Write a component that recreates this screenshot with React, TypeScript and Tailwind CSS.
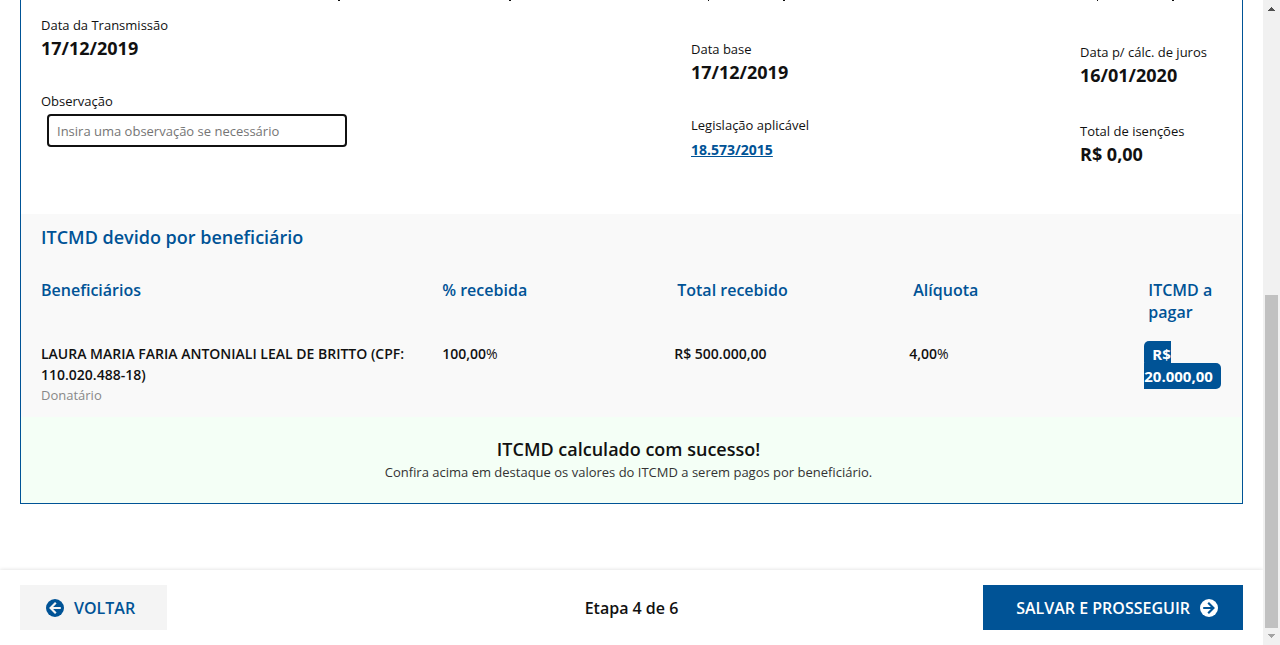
import React from "react";

function Field({ label, value }: { label: string; value: string }) {
  return (
    <div>
      <dt className="text-[13px] leading-6">{label}</dt>
      <dd className="text-lg leading-[22px] font-bold">{value}</dd>
    </div>
  );
}

function Percent({ value }: { value: string }) {
  return (
    <>
      {value}
      <span className="font-normal">%</span>
    </>
  );
}

function ArrowIcon({ className, flip, arrow }: { className: string; flip?: boolean; arrow: string }) {
  return (
    <svg viewBox="0 0 18 18" className={className} aria-hidden="true">
      <circle cx="9" cy="9" r="9" fill="currentColor" />
      <path
        d={flip ? "M14.8 9H4.6M9.8 3.8L4.6 9l5.2 5.2" : "M3.2 9h10.2M8.2 3.8L13.4 9l-5.2 5.2"}
        fill="none"
        className={arrow}
        strokeWidth="2.2"
      />
    </svg>
  );
}

function ClippedLine() {
  return (
    <div className="grid h-px grid-cols-[650fr_389fr_162fr]" aria-hidden="true">
      <div className="flex pl-[297px]">
        <i className="h-px w-0.5 bg-[#111]" />
        <i className="ml-[169px] h-px w-0.5 bg-[#111]" />
      </div>
      <div className="flex pl-[17px]">
        <i className="h-px w-px bg-[#111]" />
        <i className="ml-[74px] h-px w-0.5 bg-[#111]" />
      </div>
      <div className="flex pl-[17px]">
        <i className="h-px w-px bg-[#111]" />
        <i className="ml-[74px] h-px w-0.5 bg-[#111]" />
      </div>
    </div>
  );
}

export default function App() {
  return (
    <div className="flex min-h-screen bg-white font-['Open_Sans','Noto_Sans',sans-serif] text-[#111]">
      <div className="flex min-w-0 flex-1 flex-col">
        <main className="flex-1 px-5">
          <section className="border border-t-0 border-[#005396]">
            <div className="pb-[49px] pl-5">
              <ClippedLine />
              <div className="grid grid-cols-[650fr_389fr_162fr]">
                <div className="pt-3">
                  <dl>
                    <Field label="Data da Transmissão" value="17/12/2019" />
                  </dl>
                  <label htmlFor="obs" className="mt-[30px] block text-[13px] leading-[25px]">
                    Observação
                  </label>
                  <input
                    id="obs"
                    type="text"
                    placeholder="Insira uma observação se necessário"
                    className="ml-1.5 block h-[33px] w-[300px] rounded-sm border-2 border-[#111] px-2 text-[13px] outline-none placeholder:text-[#757575]"
                  />
                </div>
                <div className="pt-9">
                  <dl>
                    <Field label="Data base" value="17/12/2019" />
                  </dl>
                  <p className="mt-[30px] text-[13px] leading-6">Legislação aplicável</p>
                  <a href="#legislacao" className="text-sm leading-[25px] font-bold text-[#005396] underline">
                    18.573/2015
                  </a>
                </div>
                <dl className="flex flex-col gap-[33px] pt-[39px] whitespace-nowrap">
                  <Field label="Data p/ cálc. de juros" value="16/01/2020" />
                  <Field label="Total de isenções" value="R$ 0,00" />
                </dl>
              </div>
            </div>

            <div className="bg-[#f9f9f9] pt-[11px] pb-[11px]">
              <h2 className="pl-5 text-lg leading-6 font-semibold text-[#005396]">ITCMD devido por beneficiário</h2>
              <table className="mt-[30px] w-full table-fixed text-left">
                <thead className="align-top text-base leading-[22px] text-[#005396]">
                  <tr>
                    <th className="w-[34.5%] pb-5 pl-5 font-semibold">Beneficiários</th>
                    <th className="w-[19%] pb-5 font-semibold">% recebida</th>
                    <th className="w-[19.25%] pb-5 pl-[3px] font-semibold">Total recebido</th>
                    <th className="w-[19.25%] pb-5 pl-1 font-semibold">Alíquota</th>
                    <th className="pb-5 pl-1 font-semibold">ITCMD a pagar</th>
                  </tr>
                </thead>
                <tbody className="align-top text-sm leading-[21px] font-semibold">
                  <tr>
                    <td className="pr-8 pl-5">
                      LAURA MARIA FARIA ANTONIALI LEAL DE BRITTO (CPF: 110.020.488-18)
                      <span className="block text-[13px] font-normal text-[#888]">Donatário</span>
                    </td>
                    <td>
                      <Percent value="100,00" />
                    </td>
                    <td>R$ 500.000,00</td>
                    <td>
                      <Percent value="4,00" />
                    </td>
                    <td className="text-[15px] leading-[22px]">
                      <span className="rounded-[5px] bg-[#005396] px-2 py-[3px] font-bold text-white">R$ 20.000,00</span>
                    </td>
                  </tr>
                </tbody>
              </table>
            </div>

            <div className="bg-[#f4fff6] pt-5 pr-[26px] pb-5 pl-5 text-center">
              <p className="text-lg leading-6 font-semibold">ITCMD calculado com sucesso!</p>
              <p className="text-[13px] leading-[22px] text-[#333]">
                Confira acima em destaque os valores do ITCMD a serem pagos por beneficiário.
              </p>
            </div>
          </section>
        </main>

        <footer className="grid grid-cols-[1fr_auto_1fr] items-center px-5 py-[15px] font-semibold shadow-[0_0_4px_rgba(0,0,0,0.15)]">
          <button
            type="button"
            className="flex h-[45px] w-[147px] items-center gap-2.5 bg-[#f4f4f4] pl-[26px] text-[#005396]"
          >
            <ArrowIcon flip className="size-[18px]" arrow="stroke-[#f4f4f4]" />
            VOLTAR
          </button>
          <p>Etapa 4 de 6</p>
          <button
            type="button"
            className="flex h-[45px] w-[260px] items-center justify-end gap-2.5 justify-self-end bg-[#005396] pr-[25px] text-white"
          >
            SALVAR E PROSSEGUIR
            <ArrowIcon className="size-[18px]" arrow="stroke-[#005396]" />
          </button>
        </footer>
      </div>

      <div className="flex w-[17px] shrink-0 flex-col items-center bg-[#f1f1f1] py-[7px]" aria-hidden="true">
        <svg viewBox="0 0 7 4" className="h-1 w-[7px] fill-[#505050]">
          <path d="M3 0h1v1h1v1h1v1h1v1H0V3h1V2h1V1h1z" />
        </svg>
        <div className="flex-[284]" />
        <div className="w-[13px] flex-[333] bg-[#c1c1c1]" />
        <svg viewBox="0 0 7 4" className="mt-[6px] h-1 w-[7px] fill-[#a3a3a3]">
          <path d="M3 4h1V3h1V2h1V1h1V0H0v1h1v1h1v1h1z" />
        </svg>
      </div>
    </div>
  );
}
